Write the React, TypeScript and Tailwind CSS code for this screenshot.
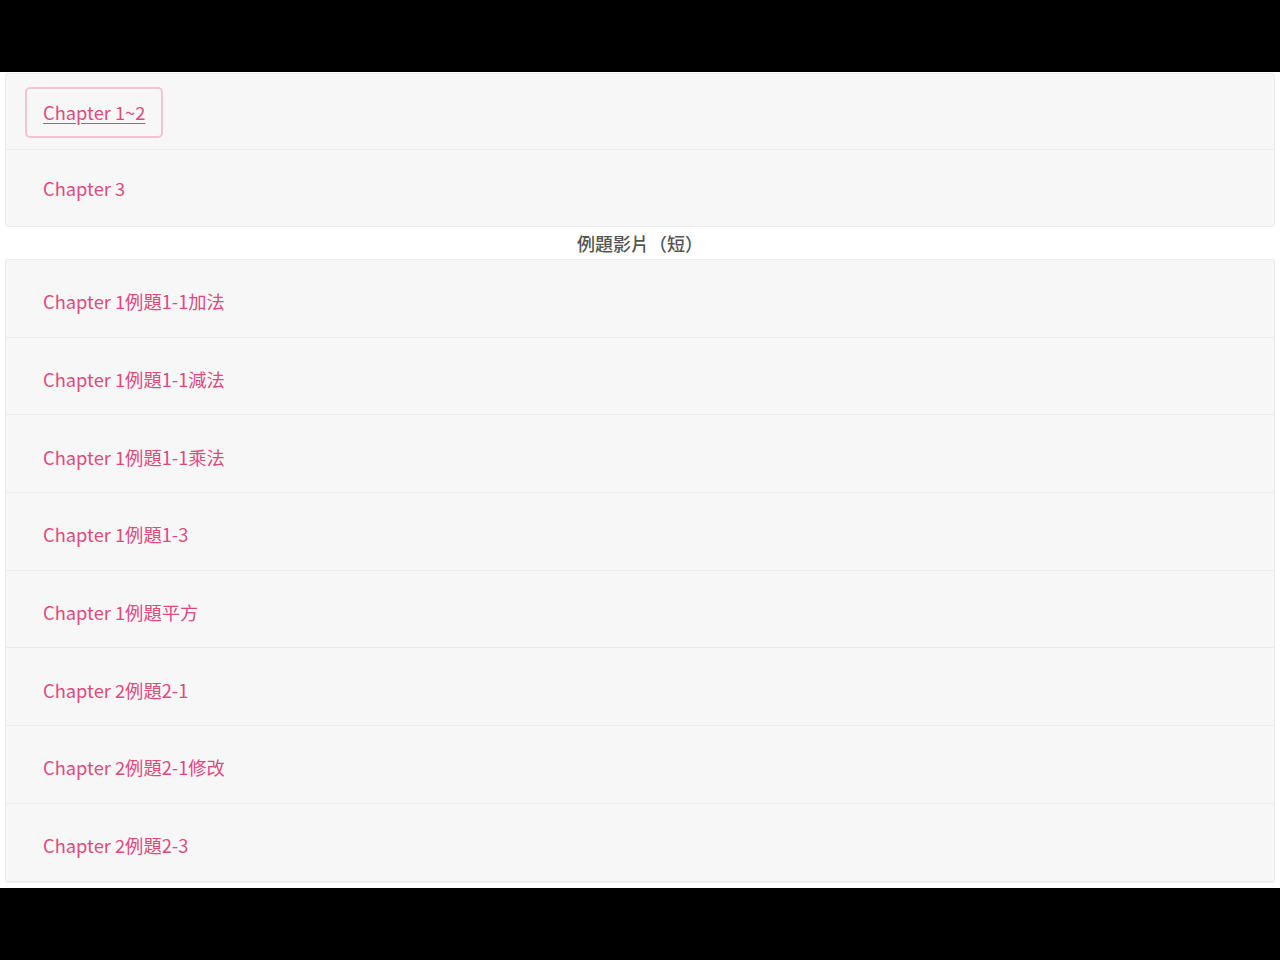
import React from 'react';

const TOP_ITEMS = ['Chapter 1~2', 'Chapter 3'];

const SHORT_VIDEOS = [
  'Chapter 1例題1-1加法',
  'Chapter 1例題1-1減法',
  'Chapter 1例題1-1乘法',
  'Chapter 1例題1-3',
  'Chapter 1例題平方',
  'Chapter 2例題2-1',
  'Chapter 2例題2-1修改',
  'Chapter 2例題2-3',
];

function ListItem({ label, focused, tall }: { label: string; focused?: boolean; tall?: boolean }) {
  return (
    <div
      className={`flex items-center border-b border-[#ececec] pl-[19px] ${
        tall ? 'h-[77.7px] pt-[7px]' : 'h-[76px] pt-[2px] last:border-b-0'
      }`}
    >
      <a
        href="#"
        className={`rounded-[5px] border-2 px-[16px] py-[10px] text-[18.3px] text-[#df4a7c] ${
          focused ? 'border-[#f2c4d3] underline underline-offset-[3px]' : 'border-transparent'
        }`}
      >
        {label}
      </a>
    </div>
  );
}

export default function App() {
  return (
    <div
      className="flex h-[960px] w-full flex-col bg-black"
      style={{ fontFamily: '"Noto Sans CJK TC", "Noto Sans", sans-serif' }}
    >
      <div className="h-[72px] shrink-0" />
      <div className="h-[816px] shrink-0 overflow-hidden bg-white px-[5px] pt-px">
        <div className="rounded-[3px] border border-[#ececec] bg-[#f7f7f7]">
          {TOP_ITEMS.map((t, i) => (
            <ListItem key={t} label={t} focused={i === 0} />
          ))}
        </div>
        <div className="flex h-[32px] items-center justify-center text-[18px] font-medium text-[#555555]">
          例題影片（短）
        </div>
        <div className="rounded-[3px] border border-[#ececec] bg-[#f7f7f7]">
          {SHORT_VIDEOS.map((t) => (
            <ListItem key={t} label={t} tall />
          ))}
        </div>
      </div>
    </div>
  );
}
